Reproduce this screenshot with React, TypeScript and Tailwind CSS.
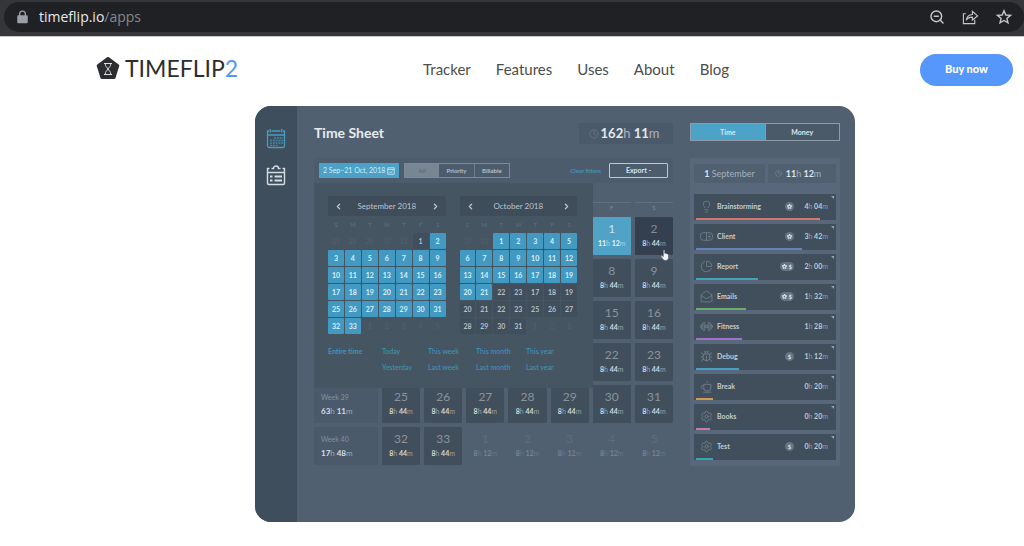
import type { ReactNode } from "react";
import { ChevronLeft, ChevronRight, Clock, Lightbulb, MailOpen, PieChart, Settings, Star, ZoomOut, Bug } from "lucide-react";

const navLinks = ["Tracker", "Features", "Uses", "About", "Blog"];

const quickRanges = ["Entire time", "Today", "This week", "This month", "This year", "", "Yesterday", "Last week", "Last month", "Last year"];

type Day = { n: number; kind: "on" | "off" | "faded" };

const days = (list: number[], kind: Day["kind"]): Day[] => list.map((n) => ({ n, kind }));
const range = (from: number, to: number) => Array.from({ length: to - from + 1 }, (_, i) => from + i);

const september: Day[] = [
    ...days([27, 28, 29, 30, 31], "faded"),
    ...days([1], "off"),
    ...days([...range(2, 23), ...range(25, 33)], "on"),
    ...days(range(1, 5), "faded"),
];

const october: Day[] = [
    ...days([30, 31], "faded"),
    ...days(range(1, 21), "on"),
    ...days([22, 23, 17, 18, 19, 20, 21, 22, 23, 25, 26, 27, 28, 29, 30, 31], "off"),
    ...days(range(1, 3), "faded"),
];

const dayStyles = {
    on: "bg-[#429ac2] text-[#d9eef7]",
    off: "bg-[#414e5b] text-[#b4bfc9]",
    faded: "text-[#4f5e6b]",
};

// Days of the first weeks are hidden under the calendar popup, only Friday and Saturday stay visible.
const openDays = [1, 2, 8, 9, 15, 16, 22, 23];

const tasks = [
    { name: "Brainstorming", icon: Lightbulb, h: "4", m: "04", badge: "star", color: "bg-[#d0786b]", width: 90 },
    { name: "Client", icon: ToggleIcon, h: "3", m: "42", badge: "star", color: "bg-[#6281bd]", width: 77 },
    { name: "Report", icon: PieChart, h: "2", m: "00", badge: "both", color: "bg-[#45a3b9]", width: 45 },
    { name: "Emails", icon: MailOpen, h: "1", m: "32", badge: "both", color: "bg-[#68ad69]", width: 36 },
    { name: "Fitness", icon: BarbellIcon, h: "1", m: "28", badge: "", color: "bg-[#a073c8]", width: 33 },
    { name: "Debug", icon: Bug, h: "1", m: "12", badge: "money", color: "bg-[#479fc8]", width: 31 },
    { name: "Break", icon: CupIcon, h: "0", m: "20", badge: "", color: "bg-[#cf9a52]", width: 12 },
    { name: "Books", icon: Settings, h: "0", m: "20", badge: "", color: "bg-[#c57bb0]", width: 10 },
    { name: "Test", icon: Settings, h: "0", m: "20", badge: "money", color: "bg-[#35a9b0]", width: 12 },
];

type IconProps = { className?: string; strokeWidth?: number };

function ToggleIcon({ className }: IconProps) {
    return (
        <svg viewBox="0 0 24 24" className={className} fill="none" stroke="currentColor" strokeWidth="1.5">
            <rect x="1" y="5" width="22" height="14" rx="5" />
            <path d="M12 5v14M16 9h3M15 12h5M16 15h3" />
        </svg>
    );
}

function BarbellIcon({ className }: IconProps) {
    return (
        <svg viewBox="0 0 24 24" className={className} fill="none" stroke="currentColor" strokeWidth="1.5">
            <path d="M9 10.500h6v3H9zM1 10v4M23 10v4" />
            <rect x="5.500" y="4.500" width="3.500" height="15" rx="1.500" />
            <rect x="15" y="4.500" width="3.500" height="15" rx="1.500" />
            <path d="M5.500 7.500H4a1.500 1.500 0 0 0-1.500 1.500v6A1.500 1.500 0 0 0 4 16.500h1.500M18.500 7.500H20a1.500 1.500 0 0 1 1.500 1.500v6a1.500 1.500 0 0 1-1.500 1.500h-1.500" />
        </svg>
    );
}

function CupIcon({ className }: IconProps) {
    return (
        <svg viewBox="0 0 24 24" className={className} fill="none" stroke="currentColor" strokeWidth="1.5">
            <path d="M7 8h13v7a5 5 0 0 1-5 5h-3a5 5 0 0 1-5-5zM7 10H5a2.500 2.500 0 0 0 0 6h2M6 22.500h15M13.500 5V2" />
        </svg>
    );
}

function Duration({ h, m, className }: { h: string; m: string; className?: string }) {
    return (
        <span className={`whitespace-nowrap font-bold ${className}`}>
            {h}<span className="font-normal opacity-60">h</span> {m}<span className="font-normal opacity-60">m</span>
        </span>
    );
}

function BrowserBar() {
    return (
        <div className="bg-[#35363a] border-b border-[#c9cacc] pl-1 pt-[2px] pb-1">
            <div className="flex items-center h-[30px] bg-[#202124] rounded-full pl-3 pr-3">
                <svg viewBox="0 0 14 16" className="w-[13px] h-[14px] text-[#9aa0a6]" fill="currentColor">
                    <path d="M3 6V4.500a4 4 0 0 1 8 0V6h1a1 1 0 0 1 1 1v7a1 1 0 0 1-1 1H2a1 1 0 0 1-1-1V7a1 1 0 0 1 1-1zm1.500 0h5V4.500a2.500 2.500 0 0 0-5 0z" />
                </svg>
                <div className="flex-1 pl-[10px] text-[14px] leading-5 text-[#85888c] font-['Open_Sans',sans-serif]">
                    <span className="text-[#e8eaed]">timeflip.io</span>/apps
                </div>
                <div className="flex items-center gap-[17px] text-[#c4c7c9]">
                    <button aria-label="Zoom out"><ZoomOut className="w-4 h-4" strokeWidth={2.2} /></button>
                    <button aria-label="Share">
                        <svg viewBox="0 0 18 16" className="w-[17px] h-4" fill="none" stroke="currentColor" strokeWidth="1.2">
                            <path d="M4 4.500H1.500v10.500h12v-4" />
                            <path d="M4.500 11.500c.5-4 2.500-6 6.500-6.200V2l5.500 4.800-5.500 4.400V8.200c-3-.1-5 .8-6.500 3.300z" />
                        </svg>
                    </button>
                    <button aria-label="Bookmark">
                        <svg viewBox="0 0 16 16" className="w-4 h-4" fill="none" stroke="currentColor" strokeWidth="1.4">
                            <path d="M8 1.800 9.800 6l4.600.4-3.500 3 1.100 4.500L8 11.500l-4 2.400 1.100-4.500-3.500-3L6.200 6z" />
                        </svg>
                    </button>
                </div>
            </div>
        </div>
    );
}

function Header() {
    return (
        <header className="flex items-center h-[69px] pl-[96px] pr-[11px] pb-1">
            <a href="#" className="flex items-center gap-[5px] pb-1 text-[23px] leading-6 text-[#2c2d2f]">
                <svg viewBox="0 0 24 24" className="w-6 h-6">
                    <path d="M12 2.500 21.800 9.600 18.100 21.500H5.900L2.200 9.600z" fill="#2c2d31" stroke="#2c2d31" strokeWidth="3" strokeLinejoin="round" />
                    <path d="M8 7.500h8M8 18.500h8M9.200 7.500c0 3 2 4 2.800 5.500-.8 1.500-2.800 2.500-2.800 5.500M14.800 7.500c0 3-2 4-2.800 5.500.8 1.500 2.800 2.500 2.800 5.500" fill="none" stroke="#dcdcdc" strokeWidth="1" />
                </svg>
                <span>TIMEFLIP<span className="text-[#5597f7]">2</span></span>
            </a>
            <nav className="flex flex-1 gap-[25px] pl-[185px] text-[15px] text-[#4b4d4f]">
                {navLinks.map((link) => (
                    <a key={link} href="#">{link}</a>
                ))}
            </nav>
            <button className="w-[93px] h-8 rounded-full bg-[#5597fb] text-white text-[11px] font-black">Buy now</button>
        </header>
    );
}

function Sidebar() {
    return (
        <aside className="flex flex-col items-center gap-4 w-[42px] shrink-0 pt-[22px] bg-[#3f4e5d]">
            <button aria-label="Calendar" className="text-[#489cc0]">
                <svg viewBox="0 0 20 21" className="w-5 h-[21px]" fill="none" stroke="currentColor" strokeWidth="1.3">
                    <path d="M3 3H1.500v15a1.500 1.500 0 0 0 1.500 1.500h14a1.500 1.500 0 0 0 1.500-1.500V3H17M5.500 3h9M1 7h18M4.200 1v3.500M15.800 1v3.500" />
                    <path d="M8 10h9M4 12.500h13M4 15h13M4 17.300h8" strokeDasharray="2 .8" opacity=".7" />
                </svg>
            </button>
            <button aria-label="Tasks" className="text-[#d5dce2]">
                <svg viewBox="0 0 20 21" className="w-5 h-[21px]" fill="none" stroke="currentColor" strokeWidth="1.400">
                    <path d="M3.500 3.500H1.500v14.500a1.500 1.500 0 0 0 1.500 1.500h14a1.500 1.500 0 0 0 1.500-1.500V3.500H16.500M1 7.500h18M5.500 3.500h2a2.500 2.500 0 0 1 5 0h2" />
                    <path d="M4 11.500h2.500M8.500 11.500H16M4 15.500h2.500M8.500 15.500H16" strokeWidth="1.800" />
                </svg>
            </button>
        </aside>
    );
}

function Month({ title, cells }: { title: string; cells: Day[] }) {
    return (
        <div className="flex-1">
            <div className="flex items-center justify-between h-5 px-[6px] bg-[#3f4c5a] rounded-xs text-[8px] text-[#bac4cd]">
                <button aria-label="Previous month"><ChevronLeft className="w-[9px] h-[9px]" strokeWidth={3.5} /></button>
                <span>{title}</span>
                <button aria-label="Next month"><ChevronRight className="w-[9px] h-[9px]" strokeWidth={3.5} /></button>
            </div>
            <div className="grid grid-cols-7 gap-px pt-[2px] pb-[2px] text-center text-[6px] leading-[13px] text-[#61717f]">
                {["S", "M", "T", "W", "T", "F", "S"].map((d, i) => <span key={i}>{d}</span>)}
            </div>
            <div className="grid grid-cols-7 gap-px">
                {cells.map((day, i) => (
                    <button key={i} className={`h-4 rounded-[1px] text-[7px] font-bold leading-4 ${dayStyles[day.kind]}`}>{day.n}</button>
                ))}
            </div>
        </div>
    );
}

function CalendarPopup() {
    return (
        <div className="absolute left-0 top-0 w-[279px] h-[205px] pl-[14px] pr-4 pt-[13px] bg-[#465562]">
            <div className="flex gap-[14px]">
                <Month title="September 2018" cells={september} />
                <Month title="October 2018" cells={october} />
            </div>
            <div className="grid grid-cols-[54px_46px_48px_50px_1fr] pt-[9px] text-[7px] leading-4 text-[#4294b8] whitespace-nowrap">
                {quickRanges.map((label, i) =>
                    label ? <a key={i} href="#" className={i === 0 ? "font-bold" : "font-medium"}>{label}</a> : <span key={i} />
                )}
            </div>
        </div>
    );
}

function DayCell({ n, kind = "normal" }: { n: number; kind?: "normal" | "active" | "hover" | "next" }) {
    const styles = {
        normal: "bg-[#414e5b] text-[#d0d7dd]",
        active: "bg-[#50a3c7] text-[#e7f3f8]",
        hover: "bg-[#344050] text-[#d0d7dd]",
        next: "text-[#758492]",
    };
    return (
        <div className={`flex flex-col items-center h-[38px] pt-[5px] rounded-[1px] ${styles[kind]}`}>
            <span className={`text-[12px] leading-[14px] ${kind === "next" ? "opacity-40" : kind === "active" ? "opacity-80" : "opacity-50"}`}>{n}</span>
            <Duration h={kind === "active" ? "11" : "8"} m={kind === "normal" || kind === "hover" ? "44" : "12"} className="text-[7px] leading-[14px]" />
        </div>
    );
}

function WeekCell({ week, h, m }: { week: string; h: string; m: string }) {
    return (
        <div className="flex flex-col h-[38px] pl-[7px] pt-[5px] bg-[#4b5a6a]">
            <span className="text-[7px] leading-[14px] text-[#8491a0]">{week}</span>
            <Duration h={h} m={m} className="text-[8px] leading-[14px] text-[#d6dde3]" />
        </div>
    );
}

function WeekGrid() {
    return (
        <div className="relative pt-[19px]">
            <div className="grid grid-cols-[64px_repeat(7,minmax(0,1fr))] gap-x-1 pb-1 text-center text-[6px] leading-[10px] text-[#7b8998]">
                <span className="col-start-7 border-t border-[#617080]">F</span>
                <span className="border-t border-[#617080]">S</span>
            </div>
            <div className="grid grid-cols-[64px_repeat(7,minmax(0,1fr))] gap-1">
                {openDays.map((n, i) => (
                    <div key={n} className={i % 2 === 0 ? "col-start-7" : ""}>
                        <DayCell n={n} kind={n === 1 ? "active" : n === 2 ? "hover" : "normal"} />
                    </div>
                ))}
                <WeekCell week="Week 39" h="63" m="11" />
                {range(25, 31).map((n) => <DayCell key={n} n={n} />)}
                <WeekCell week="Week 40" h="17" m="48" />
                {[32, 33].map((n) => <DayCell key={n} n={n} />)}
                {range(1, 5).map((n) => <DayCell key={n} n={n} kind="next" />)}
            </div>
            <CalendarPopup />
            <svg viewBox="0 0 12 14" className="absolute right-[3px] top-[66px] w-[10px] h-3">
                <path d="M4 1.500c0-1 1.700-1 1.700 0V5c.5-.4 1.400-.3 1.600.3.600-.3 1.300 0 1.500.5.800-.2 1.400.3 1.400 1V10c0 2-1 3.500-3 3.500H5.500C4 13.500 2.500 10.500 1.200 8.700c-.5-1 .6-1.600 1.300-.9L4 9z" fill="#f1f4f6" stroke="#3b4652" strokeWidth=".6" />
            </svg>
        </div>
    );
}

function FilterBar() {
    return (
        <div className="flex items-center h-[25px] pl-[5px] pr-[5px] bg-[#4d5c6c] text-[6px]">
            <button className="flex items-center justify-between w-20 h-[15px] px-1 bg-[#4ba2c6] text-[#d5ecf5] text-[7px] whitespace-nowrap">
                2 Sep–21 Oct, 2018
                <svg viewBox="0 0 10 10" className="w-2 h-2" fill="none" stroke="currentColor">
                    <path d="M1 1h8v8H1zM1 3h8M3 6l1.500 1.500L7 4.500" />
                </svg>
            </button>
            <div className="flex ml-[5px] h-[15px] w-[106px] border border-[#7d8995] text-[#b5bfc8] font-bold">
                <button className="flex-1 bg-[#788694] text-[#5c6977]">All</button>
                <button className="flex-1 border-r border-[#6f7d8a]">Priority</button>
                <button className="flex-1">Billable</button>
            </div>
            <a href="#" className="ml-auto mr-2 font-bold text-[#4294b8]">Clear filters</a>
            <button className="w-[59px] h-[15px] border border-[#c0c8cf] rounded-[1px] text-[7px] font-bold text-[#dce2e7]">Export -</button>
        </div>
    );
}

function Badge({ children }: { children: ReactNode }) {
    return <span className="flex items-center justify-center gap-[2px] min-w-[9px] h-[9px] px-[2px] rounded-full bg-[#667481] text-[6px] leading-[9px] font-bold text-[#dbe1e6]">{children}</span>;
}

function TaskList() {
    return (
        <section className="w-[150px] shrink-0">
            <div className="flex h-[18px] mb-[17px] border border-[#8f9ca8] text-[7px] font-bold text-[#dfe5ea]">
                <button className="flex-1 bg-[#4da3c7]">Time</button>
                <button className="flex-1 border-l border-[#8f9ca8] bg-[#4b5a69]">Money</button>
            </div>
            <div className="bg-[#58687a] px-1 pt-[6px] pb-[6px]">
                <div className="flex gap-[3px] pb-[11px] text-[9px] leading-[19px] text-[#a5b1bc]">
                    <div className="flex-1 bg-[#506071] text-center"><b className="text-[#dbe2e8]">1</b> September</div>
                    <div className="flex items-center justify-center gap-1 w-[68px] pr-2 bg-[#506071]">
                        <Clock className="w-[7px] h-[7px] text-[#76869a]" />
                        <Duration h="11" m="12" className="text-[#dbe2e8]" />
                    </div>
                </div>
                <ul className="flex flex-col gap-1">
                    {tasks.map((task) => {
                        const Icon = task.icon;
                        return (
                            <li key={task.name} className="h-[26px] px-[2px] bg-[#414e5b] rounded-[1px]">
                                <div className="relative flex items-center h-6 pr-[6px] text-[#c3ccd4]">
                                    <Icon className="w-[13px] h-[13px] ml-1 mr-1 text-[#74828f]" strokeWidth={1.5} />
                                    <span className="flex-1 text-[7px] font-bold">{task.name}</span>
                                    {task.badge && (
                                        <Badge>
                                            {task.badge !== "money" && <Star className="w-[5px] h-[5px]" strokeWidth={5} />}
                                            {task.badge !== "star" && "$"}
                                        </Badge>
                                    )}
                                    <Duration h={task.h} m={task.m} className="w-[34px] text-right text-[7px]" />
                                    <svg viewBox="0 0 3 3" className="absolute right-0 top-[2px] w-[3px] h-[3px]" fill="#9ba7b2"><path d="M0 0h3v3z" /></svg>
                                </div>
                                <div className={`h-[2px] ${task.color}`} style={{ width: `${task.width}%` }} />
                            </li>
                        );
                    })}
                </ul>
            </div>
        </section>
    );
}

export default function App() {
    return (
        <div className="min-h-screen bg-white font-['Lato',sans-serif]">
            <BrowserBar />
            <Header />
            <main className="pl-[255px] pr-[169px] pb-6">
                <div className="flex min-h-[416px] rounded-2xl overflow-hidden bg-[#516070]">
                    <Sidebar />
                    <div className="flex flex-1 gap-[17px] pl-[17px] pr-[15px] pt-[17px]">
                        <section className="flex-1">
                            <div className="flex items-start justify-between h-[35px]">
                                <h1 className="text-[14px] leading-[19px] font-bold text-[#e6ebef]">Time Sheet</h1>
                                <div className="flex items-center justify-center gap-[2px] w-[94px] h-[21px] pr-1 bg-[#4b5a6b] text-[#e3e9ee]">
                                    <Clock className="w-[10px] h-[10px] text-[#65758a]" />
                                    <Duration h="162" m="11" className="text-[13px]" />
                                </div>
                            </div>
                            <FilterBar />
                            <WeekGrid />
                        </section>
                        <TaskList />
                    </div>
                </div>
            </main>
        </div>
    );
}
